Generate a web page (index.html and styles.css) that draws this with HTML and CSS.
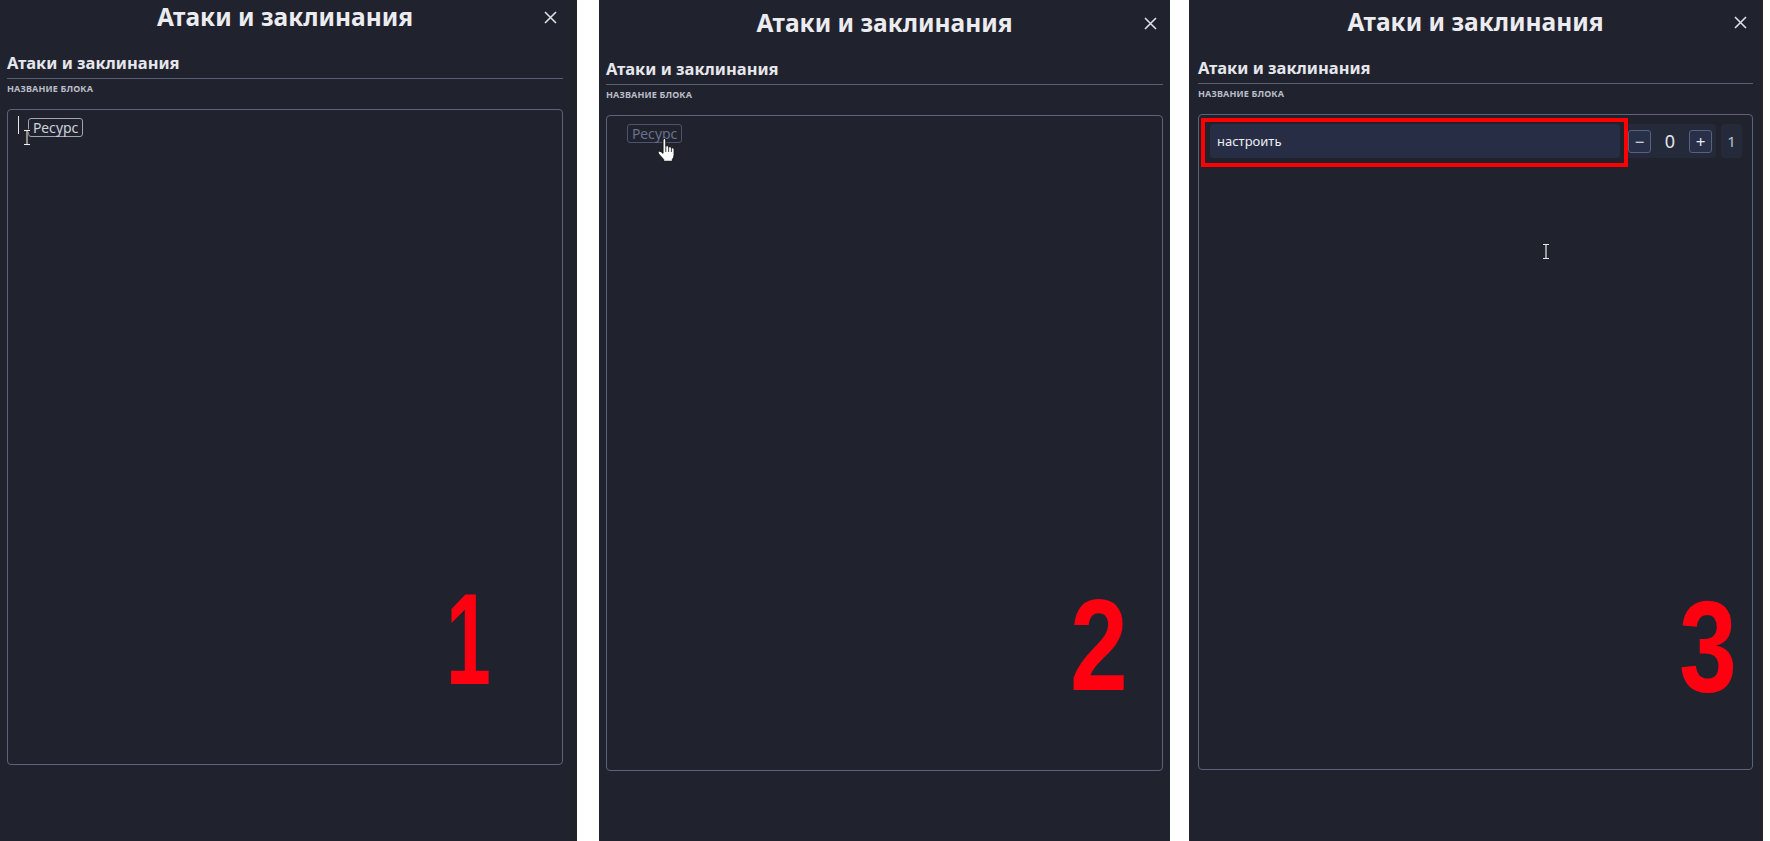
FILE: index.html
```html
<!DOCTYPE html>
<html lang="ru">
<head>
<meta charset="utf-8">
<title>Атаки и заклинания</title>
<link rel="stylesheet" href="styles.css">
</head>
<body>
<div class="stage">
  <section class="panel panel--one">
    <div class="panel__body">
      <header class="head">
        <span></span>
        <h1 class="head__title">Атаки и заклинания</h1>
        <span class="head__close"><svg width="13" height="13" viewBox="0 0 13 13"><path d="M1 1L12 12M12 1L1 12" stroke="#dfe0e6" stroke-width="1.6" fill="none"/></svg></span>
      </header>
      <h2 class="sub">Атаки и заклинания</h2>
      <div class="label">НАЗВАНИЕ БЛОКА</div>
      <div class="box">
        <div class="slot"><span class="caret"></span><span class="chip">Ресурс</span></div>
      </div>
    </div>
    <div class="panel__track"></div>
    <svg class="cursor cursor--ibeam-one" width="8" height="17" viewBox="0 0 8 17"><path d="M1 1.5h6M4 1.5v14M1 15.5h6" stroke="#2a2a2a" stroke-width="2.6" fill="none"/><path d="M1 1.5h6M4 1.5v14M1 15.5h6" stroke="#f2f2f2" stroke-width="1" fill="none"/></svg>
    <div class="mark mark--one">1</div>
  </section>

  <section class="panel panel--two">
    <div class="panel__body">
      <header class="head">
        <span></span>
        <h1 class="head__title">Атаки и заклинания</h1>
        <span class="head__close"><svg width="13" height="13" viewBox="0 0 13 13"><path d="M1 1L12 12M12 1L1 12" stroke="#dfe0e6" stroke-width="1.6" fill="none"/></svg></span>
      </header>
      <h2 class="sub">Атаки и заклинания</h2>
      <div class="label">НАЗВАНИЕ БЛОКА</div>
      <div class="box">
        <div class="slot slot--ghost"><span class="chip chip--ghost">Ресурс</span></div>
      </div>
    </div>
    <svg class="cursor cursor--hand" width="19" height="24" viewBox="0 0 19 24"><path d="M6 2Q6 0.5 7.4 0.5Q8.8 0.5 8.8 2V8.6Q8.9 7.6 10.2 7.6Q11.6 7.6 11.6 9V9.6Q11.7 8.6 13 8.6Q14.4 8.6 14.4 10V10.6Q14.5 9.8 15.7 9.8Q17.1 9.8 17.1 11.3V17Q17.1 19.6 15.4 21.4V23.3H6.6V21.4L1.6 15.9Q0.6 14.6 1.6 13.6Q2.8 12.6 4.1 13.7L6 15.3Z" fill="#fafafa" stroke="#111" stroke-width="1"/><path d="M8.8 9V14M11.6 10V14M14.4 11V14" stroke="#111" stroke-width="0.8"/></svg>
    <div class="mark mark--two">2</div>
  </section>

  <section class="panel panel--three">
    <div class="panel__body">
      <header class="head">
        <span></span>
        <h1 class="head__title">Атаки и заклинания</h1>
        <span class="head__close"><svg width="13" height="13" viewBox="0 0 13 13"><path d="M1 1L12 12M12 1L1 12" stroke="#dfe0e6" stroke-width="1.6" fill="none"/></svg></span>
      </header>
      <h2 class="sub">Атаки и заклинания</h2>
      <div class="label">НАЗВАНИЕ БЛОКА</div>
      <div class="box box--three">
        <div class="row">
          <div class="field">настроить</div>
          <div class="counter">
            <span class="step">−</span>
            <span class="counter__value">0</span>
            <span class="step">+</span>
          </div>
          <div class="total">1</div>
          <div class="highlight"></div>
        </div>
      </div>
    </div>
    <svg class="cursor cursor--ibeam-three" width="8" height="17" viewBox="0 0 8 17"><path d="M1 1.5h6M4 1.5v14M1 15.5h6" stroke="#e8e8e8" stroke-width="1.2" fill="none"/></svg>
    <div class="mark mark--three">3</div>
  </section>
</div>
</body>
</html>
```

FILE: styles.css
```css
* { box-sizing: border-box; }

html, body {
  margin: 0;
  padding: 0;
}

body {
  background: #ffffff;
  font-family: "Noto Sans", "Open Sans", sans-serif;
  overflow: hidden;
}

.stage {
  display: flex;
  width: 1770px;
  height: 841px;
}

.panel {
  position: relative;
  display: flex;
  height: 841px;
  background: #20232e;
  color: #e8e9ee;
}

.panel--one { width: 577px; }
.panel--two { width: 571px; margin-left: 22px; padding-top: 6px; }
.panel--three { width: 574px; margin-left: 19px; padding-top: 5px; }

.panel__body {
  flex: 1;
  display: flex;
  flex-direction: column;
  padding: 0 7px;
  min-width: 0;
}

.panel--three .panel__body { padding: 0 10px 0 9px; }

.panel__track {
  width: 7px;
  background: #1f212b;
}

.head {
  display: grid;
  grid-template-columns: 1fr auto 1fr;
  align-items: center;
  height: 34px;
}

.head__title {
  margin: 0;
  font-size: 24.5px;
  line-height: 34px;
  font-weight: 700;
  color: #ececf0;
  white-space: nowrap;
}

.head__close {
  justify-self: end;
  display: flex;
  margin-right: 6px;
}

.sub {
  margin: 19px 0 0;
  padding-bottom: 5px;
  font-size: 16.5px;
  line-height: 20px;
  font-weight: 700;
  color: #e6e7ec;
  border-bottom: 1px solid #585e76;
}

.label {
  margin-top: 4px;
  font-size: 9px;
  line-height: 12px;
  font-weight: 700;
  letter-spacing: 0.15px;
  color: #b9bcc7;
}

.box {
  margin-top: 14px;
  height: 656px;
  border: 1px solid #5c6279;
  border-radius: 4px;
  padding: 8px 10px;
}

.box--three { padding: 9px 10px 9px 11px; }

.slot {
  display: flex;
  align-items: flex-start;
}

.slot--ghost { padding-left: 10px; }

.caret {
  width: 1px;
  height: 18px;
  margin-top: -2px;
  margin-right: 9px;
  background: #e6e6e6;
}

.chip {
  display: inline-block;
  height: 19px;
  padding: 0 3px 0 4px;
  border: 1px solid #9ea4b6;
  border-radius: 3px;
  font-size: 14px;
  line-height: 17px;
  color: #cdd1dd;
}

.chip--ghost {
  border-color: #4b5370;
  color: #69708c;
}

.row {
  position: relative;
  display: flex;
  align-items: stretch;
  gap: 4px;
  height: 34px;
}

.field {
  flex: 1;
  background: #272d45;
  border-radius: 4px;
  padding-left: 7px;
  font-size: 13px;
  line-height: 34px;
  color: #eceef3;
}

.counter {
  display: flex;
  align-items: center;
  padding: 0 4px;
  background: #252a3b;
  border-radius: 4px;
}

.step {
  display: flex;
  align-items: center;
  justify-content: center;
  width: 23px;
  height: 23px;
  border: 1px solid #59617f;
  border-radius: 3px;
  background: #283049;
  color: #e8e9ef;
  font-size: 17px;
  line-height: 1;
}

.counter__value {
  width: 38px;
  text-align: center;
  font-size: 18px;
  color: #e4e5eb;
}

.total {
  width: 21px;
  margin-left: 1px;
  background: #252a3b;
  border-radius: 4px;
  text-align: center;
  font-size: 15px;
  line-height: 34px;
  color: #bcc0cf;
}

.highlight {
  position: absolute;
  left: -9px;
  top: -6px;
  width: 427px;
  height: 49px;
  border: 4px solid #ff0000;
}

.cursor { position: absolute; }
.cursor--ibeam-one { left: 23px; top: 129px; }
.cursor--hand { left: 58px; top: 138px; }
.cursor--ibeam-three { left: 353px; top: 243px; }

.mark {
  position: absolute;
  font-family: "Liberation Sans", Arial, sans-serif;
  font-weight: 700;
  font-size: 130px;
  line-height: 130px;
  color: #ff0010;
  transform: scaleX(0.8);
  transform-origin: left top;
}

.mark--one { left: 446px; top: 574px; transform: scaleX(0.62); }
.mark--two { left: 471px; top: 580px; }
.mark--three { left: 490px; top: 582px; }
```
